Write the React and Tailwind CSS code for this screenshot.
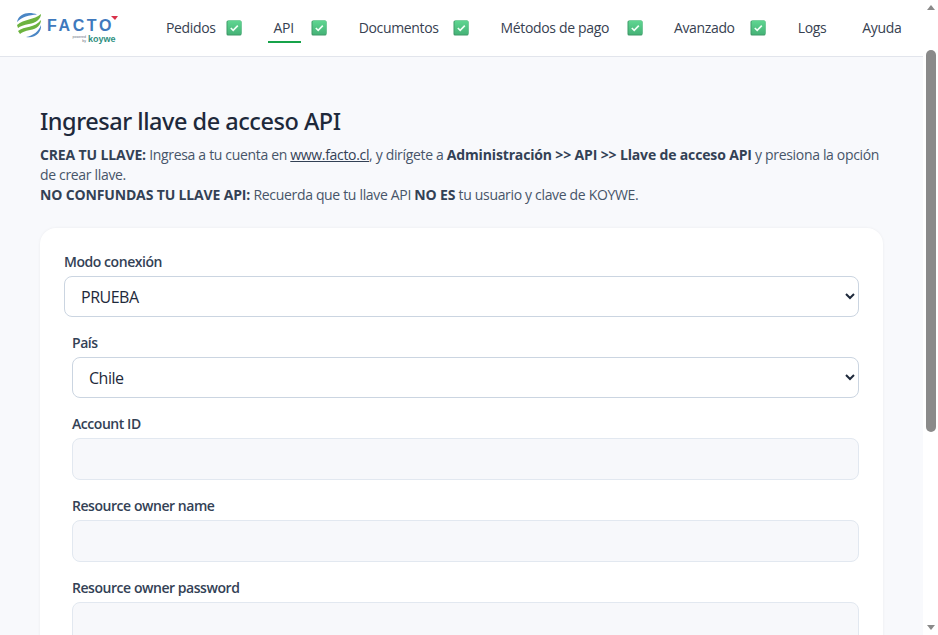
function Check() {
  return (
    <svg width="16" height="16" viewBox="0 0 16 16" className="shrink-0 block">
      <defs>
        <linearGradient id="chk" x1="0" y1="0" x2="0" y2="1">
          <stop offset="0" stopColor="#5fd691" />
          <stop offset="1" stopColor="#45b377" />
        </linearGradient>
      </defs>
      <rect x="0.5" y="0.5" width="15" height="15" rx="1.5" fill="#3f9a68" />
      <rect x="1.5" y="0.5" width="14" height="14" rx="1.5" fill="url(#chk)" />
      <path d="M4.8 8 7.2 10.4 11.8 5.6" fill="none" stroke="#f0fff6" strokeWidth="1.6" />
    </svg>
  );
}
function Logo() {
  return (
    <div className="relative w-[104px] h-[40px] shrink-0">
      <svg width="104" height="40" viewBox="0 0 104 40" className="absolute inset-0">
        <path d="M3 14 C4 8 10 5 15 5 C18 5 21 5.5 23 6.5 C15 7 8 9 3 14Z" fill="#4a86c5" />
        <path d="M3 17 C10 11 20 12 27 6 C27 11 22 15 15 16 C10 17 6 18 4 20Z" fill="#6cb33f" />
        <path d="M4 23 C10 18 21 20 27 12 C27 17 23 21 16 22 C11 23 8 24 6 26Z" fill="#6cb33f" />
        <path d="M12 29 C19 28 25 23 27 17 C28 24 21 31 12 29Z" fill="#4a86c5" />
        <path d="M97 8 L104 8 L101 12Z" fill="#d9314a" />
      </svg>
      <span className="absolute left-[33px] top-[8px] text-[16px] leading-[20px] font-bold tracking-[2.6px] text-[#3f79bd] font-['Liberation_Sans',sans-serif]">FACTO</span>
      <span className="absolute left-[56px] top-[27px] w-[16px] text-[3.5px] leading-[4px] text-right text-gray-500 font-['Liberation_Sans',sans-serif]">powered by</span>
      <span className="absolute left-[74px] top-[26px] text-[9px] leading-[10px] font-bold text-[#2f8f7f] font-['Liberation_Sans',sans-serif]">koywe</span>
    </div>
  );
}
function Nav({ children, active, check, className, checkClass }) {
  return (
    <div className={"flex items-center " + (className || "")}>
      <span className={"text-[14px] leading-[26px] tracking-[-0.35px] text-[#374151] " + (active ? "border-b-2 border-[#16a34a] pl-[6px] pr-[7px] pt-[2px] h-[30px]" : "")}>{children}</span>
      {check && <span className={checkClass}><Check /></span>}
    </div>
  );
}
function Field({ label, children, className }) {
  return (
    <div className={className}>
      <label className="block text-[14px] leading-[20px] font-semibold tracking-[-0.45px] text-[#334155] mb-[4px]">{label}</label>
      {children}
    </div>
  );
}
const selCls = "block w-full h-[41px] rounded-[8px] border border-[#cbd5e1] bg-white pl-[12px] text-[16px] tracking-[-0.5px] text-[#1e293b]";
const inpCls = "block w-full h-[42px] rounded-[8px] border border-[#e2e8f0] bg-[#f7f8fb]";
const boldCls = "font-bold tracking-[-0.15px] text-[#334155]";
export default function App() {
  return (
    <div className="flex h-[635px] w-[938px] overflow-hidden bg-white font-['Open_Sans','Noto_Sans',sans-serif]">
      <div className="flex-1 min-w-0 flex flex-col">
        <header className="h-[57px] shrink-0 bg-white border-b border-[#e2e5ec] flex items-center pl-[14px]">
          <Logo />
          <nav className="flex items-center ml-[48px]">
            <Nav check checkClass="ml-[10px]">Pedidos</Nav>
            <Nav active check checkClass="ml-[10px]" className="ml-[26px]">API</Nav>
            <Nav check checkClass="ml-[14px]" className="ml-[32px]">Documentos</Nav>
            <Nav check checkClass="ml-[18px]" className="ml-[32px]">Métodos de pago</Nav>
            <Nav check checkClass="ml-[15px]" className="ml-[31px]">Avanzado</Nav>
            <Nav className="ml-[32px]">Logs</Nav>
            <Nav className="ml-[36px]">Ayuda</Nav>
          </nav>
        </header>
        <main className="flex-1 min-h-0 overflow-hidden bg-[#f8f9fc] pl-[40px] pr-[40px] pt-[48px]">
          <h1 className="text-[23.5px] leading-[32px] font-medium tracking-[-0.47px] text-[#1e293b] font-['Noto_Sans',sans-serif]">Ingresar llave de acceso API</h1>
          <p className="mt-[8px] text-[14px] leading-[20px] tracking-[-0.33px] text-[#475569]">
            <b className={boldCls}>CREA TU LLAVE:</b> Ingresa a tu cuenta en <a className="underline text-[#334155]">www.facto.cl</a>, y dirígete a <b className={boldCls}>Administración &gt;&gt; API &gt;&gt; Llave de acceso API</b> y presiona la opción de crear llave.
            <br />
            <b className={boldCls}>NO CONFUNDAS TU LLAVE API:</b> Recuerda que tu llave API <b className={boldCls}>NO ES</b> tu usuario y clave de KOYWE.
          </p>
          <section className="mt-[23px] bg-white rounded-[16px] shadow-[0_0_3px_rgba(0,0,0,0.06)] px-[24px] pt-[24px] pb-[24px]">
            <Field label="Modo conexión">
              <select className={selCls} defaultValue="PRUEBA"><option>PRUEBA</option></select>
            </Field>
            <div className="pl-[8px]">
              <Field label="País" className="mt-[16px]">
                <select className={selCls} defaultValue="Chile"><option>Chile</option></select>
              </Field>
              <Field label="Account ID" className="mt-[16px]"><input className={inpCls} /></Field>
              <Field label="Resource owner name" className="mt-[16px]"><input className={inpCls} /></Field>
              <Field label="Resource owner password" className="mt-[16px]"><input className={inpCls} /></Field>
            </div>
          </section>
        </main>
      </div>
      <div className="w-[15px] shrink-0 bg-white flex flex-col items-center">
        <div className="mt-[5px] w-0 h-0 border-x-[4px] border-x-transparent border-b-[5px] border-b-[#8a8a8a]" />
        <div className="mt-[40px] w-[10px] h-[382px] rounded-[5px] bg-[#8a8a8a]" />
        <div className="mt-auto mb-[5px] w-0 h-0 border-x-[4px] border-x-transparent border-t-[5px] border-t-[#8a8a8a]" />
      </div>
    </div>
  );
}
